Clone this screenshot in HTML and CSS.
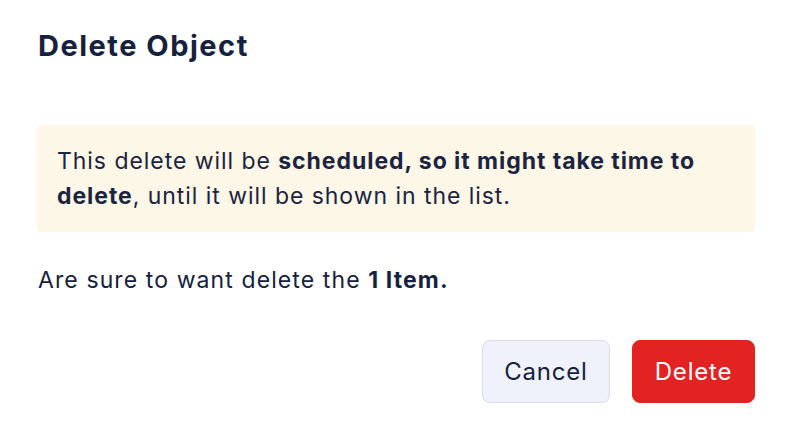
FILE: index.html
```html
<!DOCTYPE html>
<html>
<head>
<meta charset="utf-8">
<link rel="stylesheet" href="styles.css">
</head>
<body>
<div class="dialog">
  <h1 class="title">Delete Object</h1>
  <div class="alert">This delete will be <strong>scheduled, so it might take time to delete</strong>, until it will be shown in the list.</div>
  <p class="confirm">Are sure to want delete the <strong>1 Item.</strong></p>
  <div class="actions">
    <button class="btn btn-cancel">Cancel</button>
    <button class="btn btn-delete">Delete</button>
  </div>
</div>
</body>
</html>
```
FILE: styles.css
```css
html, body {
  margin: 0;
  padding: 0;
  background: #ffffff;
}
body {
  font-family: Inter, "Noto Sans", sans-serif;
  color: #16213e;
}
.dialog {
  width: 794px;
  height: 430px;
  box-sizing: border-box;
  padding: 28px 39px 0 37px;
  display: flex;
  flex-direction: column;
}
.title {
  margin: 0 0 0 1px;
  font-size: 29px;
  font-weight: 700;
  line-height: 36px;
  letter-spacing: 1.5px;
  color: #16213e;
}
.alert {
  margin-top: 61px;
  background: #fdf7e7;
  border-radius: 4px;
  padding: 19px 20px 18px 20px;
  font-size: 23px;
  line-height: 35px;
  letter-spacing: 0.95px;
  color: #1b2440;
}
.alert strong {
  font-weight: 700;
}
.confirm {
  margin: 33px 0 0 1px;
  font-size: 23px;
  line-height: 30px;
  letter-spacing: 1.1px;
}
.confirm strong { font-weight: 700; }
.actions {
  margin-top: 45px;
  display: flex;
  justify-content: flex-end;
  gap: 22px;
}
.btn {
  font-family: Inter, "Noto Sans", sans-serif;
  font-size: 24px;
  letter-spacing: 0.8px;
  height: 63px;
  border-radius: 8px;
  padding: 0;
  cursor: pointer;
}
.btn-cancel {
  background: #eff2fa;
  border: 1px solid #d6dbee;
  color: #16213e;
  width: 128px;
}
.btn-delete {
  background: #e32222;
  border: 1px solid #e32222;
  color: #ffffff;
  width: 123px;
}
```
